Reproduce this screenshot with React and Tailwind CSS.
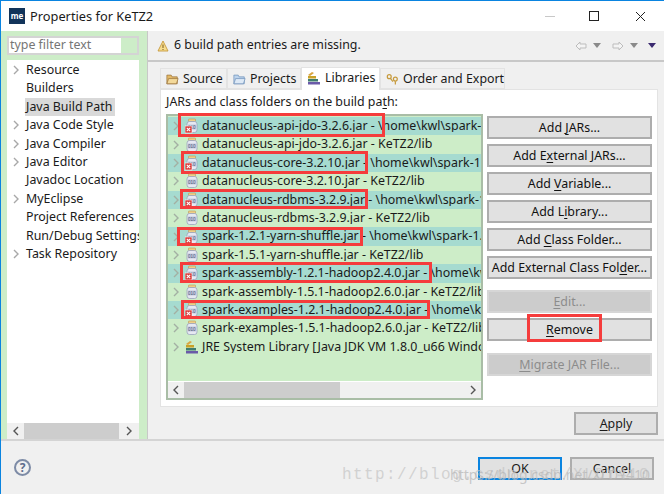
import React from "react";

// box: [left, width, top overhang, bottom overhang] of the red mark on a row
const rows = [
  { name: "datanucleus-api-jdo-3.2.6.jar - \\home\\kwl\\spark-1.2.1-bin-hadoop2.4\\lib", missing: true, box: [10, 207, 4, 2] },
  { name: "datanucleus-api-jdo-3.2.6.jar - KeTZ2/lib" },
  { name: "datanucleus-core-3.2.10.jar - \\home\\kwl\\spark-1.2.1-bin-hadoop2.4\\lib", missing: true, box: [13, 187, 3, 2] },
  { name: "datanucleus-core-3.2.10.jar - KeTZ2/lib" },
  { name: "datanucleus-rdbms-3.2.9.jar - \\home\\kwl\\spark-1.2.1-bin-hadoop2.4\\lib", missing: true, box: [12, 188, 2, 0] },
  { name: "datanucleus-rdbms-3.2.9.jar - KeTZ2/lib" },
  { name: "spark-1.2.1-yarn-shuffle.jar - \\home\\kwl\\spark-1.2.1-bin-hadoop2.4\\lib", missing: true, box: [9, 186, 0, 0] },
  { name: "spark-1.5.1-yarn-shuffle.jar - KeTZ2/lib" },
  { name: "spark-assembly-1.2.1-hadoop2.4.0.jar - \\home\\kwl\\spark-1.2.1-bin-hadoop2.4\\lib", missing: true, box: [12, 252, 2, 0] },
  { name: "spark-assembly-1.5.1-hadoop2.6.0.jar - KeTZ2/lib" },
  { name: "spark-examples-1.2.1-hadoop2.4.0.jar - \\home\\kwl\\spark-1.2.1-bin-hadoop2.4\\lib", missing: true, box: [13, 249, 1, 0] },
  { name: "spark-examples-1.5.1-hadoop2.6.0.jar - KeTZ2/lib" },
  { name: "JRE System Library [Java JDK VM 1.8.0_u66 Windows]", lib: true },
];

const tree = [
  ["Resource", true],
  ["Builders", false],
  ["Java Build Path", false, true],
  ["Java Code Style", true],
  ["Java Compiler", true],
  ["Java Editor", true],
  ["Javadoc Location", false],
  ["MyEclipse", true],
  ["Project References", false],
  ["Run/Debug Settings", false],
  ["Task Repository", true],
];

const Chevron = ({ dir = "right", className = "" }) => (
  <svg width="8" height="10" viewBox="0 0 8 10" className={`shrink-0 ${className}`}>
    <path d={dir === "right" ? "M2 1l4 4-4 4" : "M6 1L2 5l4 4"} fill="none" stroke="currentColor" strokeWidth="1.4" />
  </svg>
);

const LibIcon = () => (
  <svg width="14" height="14" viewBox="0 0 14 14" className="shrink-0">
    <path d="M1 4l4-3 2 1-4 3z" fill="#d9a441" />
    <rect x="1" y="5" width="8" height="2.5" fill="#c9a227" />
    <rect x="1" y="8" width="10" height="2.5" fill="#3f7d6e" />
    <rect x="1" y="11" width="12" height="2.5" fill="#6a5aa8" />
  </svg>
);

const JarIcon = ({ missing }) => (
  <svg width="14" height="16" viewBox="0 0 14 16" className="shrink-0">
    <rect x="3.5" y="1" width="7" height="2.5" rx="0.5" fill="#f0cf86" stroke="#b9975a" strokeWidth="0.6" />
    <rect x="2" y="3.5" width="10" height="11" rx="2.5" fill="#e6e8f2" stroke="#9aa3bd" strokeWidth="0.8" />
    <rect x="2.5" y="6.5" width="9" height="5" fill="#c3c9de" />
    <text x="3" y="10.6" fontSize="4.5" fill="#4a5578" fontFamily="Liberation Sans, sans-serif">010</text>
    {missing && (
      <>
        <rect x="0" y="8" width="7" height="7" fill="#d93a3a" stroke="#fff" strokeWidth="0.6" />
        <path d="M1.8 9.8l3.4 3.4M5.2 9.8l-3.4 3.4" stroke="#fff" strokeWidth="1.1" />
      </>
    )}
  </svg>
);

const FolderIcon = ({ open }) => (
  <svg width="13" height="12" viewBox="0 0 15 13" className="shrink-0">
    <path d="M1 2h5l1 2h6v8H1z" fill={open ? "#bcd3ec" : "#e3b968"} stroke={open ? "#6d8fb8" : "#96703a"} strokeWidth="0.8" />
    <path d="M1 12l2-6h11l-2 6z" fill={open ? "#dde9f6" : "#f3d99a"} stroke={open ? "#6d8fb8" : "#96703a"} strokeWidth="0.8" />
  </svg>
);

const KeysIcon = () => (
  <svg width="13" height="13" viewBox="0 0 16 15" className="shrink-0" fill="none" stroke="#c69a3c" strokeWidth="1.5">
    <circle cx="4" cy="4" r="2.4" />
    <path d="M5.5 6l3 4" />
    <circle cx="11.5" cy="7" r="2.4" />
    <path d="M11.5 9.5v4" />
  </svg>
);

const Tab = ({ icon, label, active, width }) => (
  <div
    className={`flex items-center gap-[4px] border border-[#e3e3e3] pl-[5px] self-end whitespace-nowrap ${width} ${
      active ? "h-[23px] bg-white border-b-0 -mb-px z-10 pb-[2px]" : "h-[21px] bg-[#f0f0f0] pt-[1px]"
    }`}
  >
    {icon}
    <span>{label}</span>
  </div>
);

// underline marks the mnemonic letter, like the SWT buttons do
const Btn = ({ pre, u, post, disabled, className = "" }) => (
  <div
    className={`h-[23px] w-[165px] shrink-0 flex items-center justify-center border-2 pt-[2px] whitespace-pre ${
      disabled
        ? "bg-[#cccccc] border-[#d6d6d6] text-[#8c8c8c]"
        : "bg-[#e1e1e1] border-[#adadad] text-[#111]"
    } ${className}`}
  >
    <span>
      {pre}
      <span className="underline underline-offset-2">{u}</span>
      {post}
    </span>
  </div>
);

export default function App() {
  return (
    <div
      className="relative w-[664px] h-[494px] overflow-hidden flex flex-col bg-[#f0f0f0] border-l border-t border-[#0a84e0] text-[12.4px] leading-none text-[#1a1a1a]"
      style={{ fontFamily: '"Noto Sans", sans-serif' }}
    >
      <div className="h-[30px] shrink-0 bg-white flex items-center pl-[8px] gap-[5px]">
        <div className="w-4 h-4 bg-[#12345a] text-white text-[8px] font-bold flex items-center justify-center">me</div>
        <span className="text-[12.8px]">Properties for KeTZ2</span>
        <div className="ml-auto flex items-center text-[#222]">
          <div className="w-[10px] h-px bg-[#c8c8c8] mr-[34px]" />
          <div className="w-[10px] h-[10px] border border-[#222] mr-[36px]" />
          <svg width="11" height="11" viewBox="0 0 11 11" className="mr-[18px]">
            <path d="M1 1l9 9M10 1l-9 9" stroke="#222" strokeWidth="1" />
          </svg>
        </div>
      </div>

      <div className="h-[408px] shrink-0 flex">
        <div className="w-[147px] shrink-0 bg-[#cdedc8] pl-[6px] pr-[8px] pt-[5px] flex flex-col border-r border-[#c8c8c8]">
          <div className="h-[19px] border-2 border-[#d4d4d4] bg-white flex text-[#767676] pl-[1px] items-center">
            <span className="flex-1">type filter text</span>
            <div className="w-[16px] h-full bg-[#cdedc8]" />
          </div>
          <div className="mt-[5px] flex-1 bg-white flex flex-col overflow-hidden">
            <div className="flex-1 pt-[1px]">
              {tree.map(([label, arrow, selected]) => (
                <div key={label} className="h-[18.4px] flex items-center whitespace-nowrap overflow-hidden">
                  <div className="w-[18px] shrink-0 flex justify-center text-[#a8a8a8]">
                    {arrow && <Chevron />}
                  </div>
                  <span className={`pl-[1px] pr-[3px] py-[3px] ${selected ? "bg-[#d9d9d9]" : ""}`}>{label}</span>
                </div>
              ))}
            </div>
            <div className="h-[16px] bg-[#f0f0f0] flex items-center text-[#555]">
              <div className="w-[17px] flex justify-center"><Chevron dir="left" /></div>
              <div className="w-[95px] h-full bg-[#cdcdcd]" />
              <div className="flex-1 flex justify-center"><Chevron /></div>
            </div>
          </div>
        </div>

        <div className="flex-1 min-w-0 flex flex-col">
          <div className="h-[31px] shrink-0 border-b-2 border-[#c8c8c8] flex items-center pl-[9px] pr-[8px] gap-[5px]">
            <svg width="12" height="12" viewBox="0 0 12 12">
              <path d="M6 1l5 10H1z" fill="#f6dc8e" stroke="#c79a3c" strokeWidth="0.9" />
              <path d="M6 4.5v3.5M6 9v1" stroke="#7a5a1c" strokeWidth="1" />
            </svg>
            <span>6 build path entries are missing.</span>
            <div className="ml-auto flex items-center gap-[6px] text-[#bdbdbd]">
              <svg width="12" height="10" viewBox="0 0 12 10"><path d="M5 1L1 5l4 4V7h6V3H5z" fill="#f4f4f4" stroke="currentColor" /></svg>
              <svg width="8" height="5" viewBox="0 0 8 5"><path d="M0 0h8L4 5z" fill="#8a8a8a" /></svg>
              <svg width="12" height="10" viewBox="0 0 12 10" className="ml-[5px]"><path d="M7 1l4 4-4 4V7H1V3h6z" fill="#f4f4f4" stroke="currentColor" /></svg>
              <svg width="8" height="5" viewBox="0 0 8 5"><path d="M0 0h8L4 5z" fill="#8a8a8a" /></svg>
              <svg width="8" height="5" viewBox="0 0 8 5" className="ml-[4px]"><path d="M0 0h8L4 5z" fill="#3b2a70" /></svg>
            </div>
          </div>

          <div className="pl-[12px] pr-[6px] pt-[3px] flex flex-col">
            <div className="flex h-[24px]">
              <Tab icon={<FolderIcon />} label="Source" width="w-[67px]" />
              <Tab icon={<FolderIcon open />} label="Projects" width="w-[74px]" />
              <Tab icon={<LibIcon />} label="Libraries" active width="w-[79px]" />
              <Tab icon={<KeysIcon />} label="Order and Export" width="w-[125px]" />
            </div>
            <div className="h-[318px] bg-white border border-[#e3e3e3] flex flex-col pl-[5px] pt-[4px] pr-[4px]">
              <div className="h-[17px] shrink-0 flex items-center whitespace-pre">
                <span>JARs and class folders on the build pa<span className="underline underline-offset-2">t</span>h:</span>
              </div>
              <div className="flex gap-[4px] mt-[3px]">
                <div className="w-[317px] h-[286px] shrink-0 border-2 border-[#a9bda6] bg-[#cdedc8] flex flex-col">
                  <div className="flex-1 pt-[1px]">
                    {rows.map((r) => (
                      <div
                        key={r.name}
                        className={`relative h-[18.4px] flex items-center pl-[2px] whitespace-nowrap ${r.missing ? "bg-[#a6dbd0]" : ""}`}
                      >
                        <div className="w-[12px] shrink-0 text-[#a3b0a3] flex justify-center"><Chevron /></div>
                        <div className="w-[19px] shrink-0 pl-[3px]">{r.lib ? <LibIcon /> : <JarIcon missing={r.missing} />}</div>
                        <div className="flex-1 min-w-0 overflow-hidden pl-[1px]">{r.name}</div>
                        {r.box && (
                          <div
                            className="absolute border-[3px] border-[#f53c3c]"
                            style={{ left: r.box[0], width: r.box[1], top: -r.box[2], bottom: -r.box[3] }}
                          />
                        )}
                      </div>
                    ))}
                  </div>
                  <div className="h-[17px] shrink-0 border-t border-white bg-[#f0f0f0] flex items-center text-[#555]">
                    <div className="w-[16px] shrink-0 flex justify-center"><Chevron dir="left" /></div>
                    <div className="w-[156px] h-full bg-[#cdcdcd]" />
                    <div className="ml-auto w-[16px] flex justify-center"><Chevron /></div>
                  </div>
                </div>
                <div className="flex flex-col pt-[2px]">
                  <Btn pre="Add " u="J" post="ARs..." />
                  <Btn pre="Add E" u="x" post="ternal JARs..." className="mt-[5px]" />
                  <Btn pre="Add " u="V" post="ariable..." className="mt-[5px]" />
                  <Btn pre="Add L" u="i" post="brary..." className="mt-[5px]" />
                  <Btn pre="Add " u="C" post="lass Folder..." className="mt-[5px]" />
                  <Btn pre="Add External Class Fol" u="d" post="er..." className="mt-[5px]" />
                  <Btn pre="" u="E" post="dit..." disabled className="mt-[11px]" />
                  <Btn pre="" u="R" post="emove" className="mt-[5px]" />
                  <Btn pre="" u="M" post="igrate JAR File..." disabled className="mt-[12px]" />
                </div>
              </div>
            </div>
            <div className="flex justify-end mt-[5px]">
              <div className="w-[84px] h-[23px] bg-[#e1e1e1] border-2 border-[#adadad] pt-[2px] flex items-center justify-center">
                <span><span className="underline underline-offset-2">A</span>pply</span>
              </div>
            </div>
          </div>
        </div>
      </div>

      <div className="flex-1 border-t-2 border-[#d4d4d4] flex items-start pt-[16px] pl-[13px] pr-[10px]">
        <div className="w-[17px] h-[17px] mt-[2px] rounded-full border-2 border-[#7d8ba6] text-[#5c6c8c] font-bold text-[12px] flex items-center justify-center">?</div>
        <div className="ml-auto flex gap-[8px]">
          <div className="w-[84px] h-[23px] bg-[#e1e1e1] border-2 border-[#0a84e0] pt-[1px] flex items-center justify-center">OK</div>
          <div className="w-[84px] h-[23px] bg-[#e1e1e1] border-2 border-[#adadad] pt-[1px] flex items-center justify-center">Cancel</div>
        </div>
      </div>

      {/* red mark over the remove button, watermarks on top of the dialog */}
      <div className="absolute left-[526px] top-[313px] w-[75px] h-[28px] border-[3px] border-[#f53c3c]" />
      <div className="absolute left-[341px] top-[466px] text-[16px] text-[#c4c4c4]/70 whitespace-nowrap" style={{ fontFamily: '"Liberation Mono", monospace', letterSpacing: "1.4px" }}>
        http://blog.csdn.net/XLDY410
      </div>
      <div className="absolute left-[449px] top-[467px] text-[14px] text-[#b4b4b4]/70 whitespace-nowrap">
        https://blog.csdn.net/XLDY410
      </div>
    </div>
  );
}
